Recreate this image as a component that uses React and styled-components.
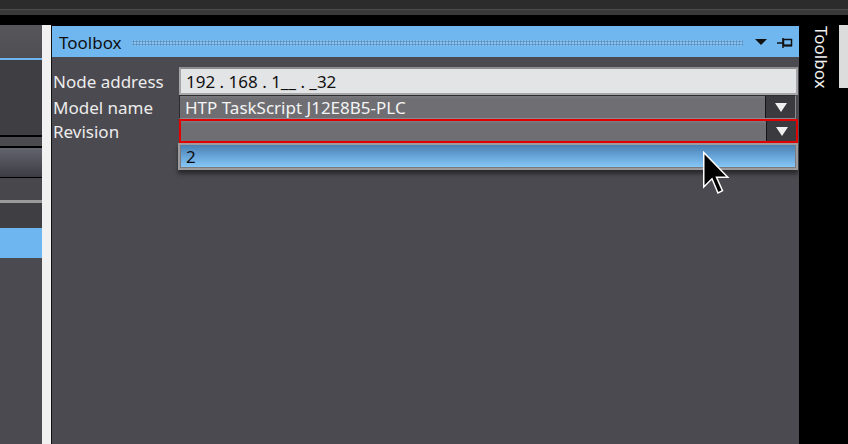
import React from 'react'
import styled, { createGlobalStyle } from 'styled-components'

const Global = createGlobalStyle`
  html, body {
    margin: 0;
    padding: 0;
    background: #000;
    overflow: hidden;
  }
  * { box-sizing: border-box; }
`

const Screen = styled.div`
  width: 848px;
  height: 444px;
  display: flex;
  flex-direction: column;
  font-family: 'Noto Sans', 'DejaVu Sans', sans-serif;
  position: relative;
`

const TopBar = styled.div`
  height: 25px;
  flex: none;
  background: linear-gradient(
    to bottom,
    #2c2c2c 0,
    #2c2c2c 9px,
    #4c4c4c 9px,
    #4c4c4c 10px,
    #393939 10px,
    #393939 15px,
    #000 15px
  );
`

const Main = styled.div`
  flex: 1;
  display: flex;
  min-height: 0;
`

const LeftPanel = styled.div`
  width: 42px;
  flex: none;
  display: flex;
  flex-direction: column;
`

const Strip = styled.div`
  height: ${(p) => p.h}px;
  flex: none;
  background: ${(p) => p.bg};
`

const Splitter = styled.div`
  width: 10px;
  flex: none;
  background: #f1f1f1;
  border-right: 1px solid #111;
`

const ToolPanel = styled.div`
  width: 747px;
  flex: none;
  display: flex;
  flex-direction: column;
  background: #4b4a50;
  border-top: 1px solid #000;
  position: relative;
`

const Header = styled.div`
  height: 31px;
  flex: none;
  background: #70b7ef;
  display: flex;
  align-items: center;
  padding: 2px 6px 0 7px;
  gap: 10px;
`

const Title = styled.span`
  font-size: 17px;
  color: #111;
`

const Grip = styled.div`
  flex: 1;
  height: 6px;
  background-color: #8cc4f0;
  background-image: radial-gradient(circle, #5289bd 0.9px, transparent 1.2px);
  background-size: 3px 3px;
  margin-right: 2px;
  opacity: 0.9;
`

const HeaderIcon = styled.svg`
  flex: none;
  display: block;
`

const Body = styled.div`
  flex: 1;
  padding: 10px 1px 0 1px;
`

const Form = styled.div`
  display: grid;
  grid-template-columns: 126px 1fr;
  align-items: center;
`

const Label = styled.div`
  font-size: 17px;
  color: #ececec;
  line-height: 18px;
  white-space: nowrap;
  padding-top: 1px;
`

const TextBox = styled.div`
  height: 28px;
  background: #e3e4e6;
  border: 2px solid #a6a6a8;
  border-top-color: #8e8e90;
  font-size: 17px;
  color: #111;
  display: flex;
  align-items: center;
  padding-left: 5px;
`

const Combo = styled.div`
  height: 24px;
  display: flex;
  align-items: stretch;
  background: linear-gradient(to bottom, #7a7a7f 0, #6e6e73 3px, #6e6e73 100%);
  border: ${(p) => (p.error ? '2px solid #e30000' : '1px solid #2c2c2f')};
  border-right-color: ${(p) => (p.error ? '#e30000' : '#8a8a8e')};
  border-bottom-color: ${(p) => (p.error ? '#e30000' : '#8a8a8e')};
  margin-right: ${(p) => (p.error ? '0' : '2px')};
`

const ComboText = styled.div`
  flex: 1;
  font-size: 17px;
  color: #f4f4f4;
  display: flex;
  align-items: center;
  padding-left: 5px;
`

const ComboButton = styled.div`
  width: 30px;
  flex: none;
  background: #3b3b3f;
  border-left: 1px solid #151515;
  display: flex;
  align-items: center;
  justify-content: center;
`

const DropList = styled.div`
  position: absolute;
  left: 126px;
  right: 1px;
  top: 117px;
  height: 27px;
  border: 2px solid #9c9c9e;
  background: #7a7a7e;
  box-shadow: 0 4px 4px rgba(0, 0, 0, 0.45);
  padding: 0 1px 1px 1px;
`

const DropItem = styled.div`
  height: 100%;
  background: linear-gradient(to bottom, #4b80b1 0, #6aa7dc 55%, #86c7f5 100%);
  font-size: 17px;
  color: #0c0c0c;
  display: flex;
  align-items: center;
  padding-left: 5px;
`

const Cursor = styled.svg`
  position: absolute;
  left: 702px;
  top: 151px;
`

const SideBar = styled.div`
  flex: 1;
  background: #000;
  display: flex;
  align-items: flex-start;
  padding-left: 12px;
  gap: 8px;
`

const SideTab = styled.div`
  writing-mode: vertical-rl;
  font-size: 17px;
  color: #f2f2f2;
  line-height: 20px;
  padding-top: 1px;
`

const SideRail = styled.div`
  width: 9px;
  height: 63px;
  margin-left: auto;
  background: #dcdcdc;
`

const Arrow = () => (
  <svg width="12" height="9" viewBox="0 0 12 9">
    <path d="M0 0 H12 L6 9 Z" fill="#f0f0f0" />
  </svg>
)

const leftStrips = [
  [33, 'linear-gradient(#57565b, #4f4e53)'],
  [2, '#6db6ef'],
  [75, '#3f3e43'],
  [2, '#000'],
  [9, '#4a4a4f'],
  [2, '#000'],
  [29, 'linear-gradient(#64646e, #3c3c44)'],
  [1, '#000'],
  [22, '#48474c'],
  [3, '#9a9a9a'],
  [25, '#3f3e43'],
  [30, '#6db6ef'],
  [200, '#4b4a50'],
]

export default function App() {
  return (
    <>
      <Global />
      <Screen>
        <TopBar />
        <Main>
          <LeftPanel>
            {leftStrips.map(([h, bg], i) => (
              <Strip key={i} h={h} bg={bg} />
            ))}
          </LeftPanel>
          <Splitter />
          <ToolPanel>
            <Header>
              <Title>Toolbox</Title>
              <Grip />
              <HeaderIcon width="12" height="7" viewBox="0 0 12 7">
                <path d="M0 0 H12 L6 6 Z" fill="#111" />
              </HeaderIcon>
              <HeaderIcon width="16" height="12" viewBox="0 0 16 12">
                <path d="M0 6 H6" stroke="#111" strokeWidth="1.5" />
                <path d="M6 1 V11" stroke="#111" strokeWidth="1.5" />
                <rect x="6.5" y="2.5" width="8" height="6" fill="none" stroke="#111" strokeWidth="1.5" />
                <path d="M7 8.5 H15" stroke="#111" strokeWidth="2" />
              </HeaderIcon>
            </Header>
            <Body>
              <Form>
                <Label>Node address</Label>
                <TextBox>192 . 168 . 1__ . _32</TextBox>
                <Label>Model name</Label>
                <Combo>
                  <ComboText>HTP TaskScript J12E8B5-PLC</ComboText>
                  <ComboButton>
                    <Arrow />
                  </ComboButton>
                </Combo>
                <Label>Revision</Label>
                <Combo error>
                  <ComboText />
                  <ComboButton>
                    <Arrow />
                  </ComboButton>
                </Combo>
              </Form>
            </Body>
            <DropList>
              <DropItem>2</DropItem>
            </DropList>
          </ToolPanel>
          <SideBar>
            <SideTab>Toolbox</SideTab>
            <SideRail />
          </SideBar>
        </Main>
        <Cursor width="32" height="48" viewBox="0 0 21 32">
          <path
            d="M1 1 L1 24 L6.5 18.5 L10.5 28 L13.5 26.5 L9.5 17.5 L17 17.5 Z"
            fill="#000"
            stroke="#fff"
            strokeWidth="1"
            strokeLinejoin="miter"
          />
        </Cursor>
      </Screen>
    </>
  )
}
